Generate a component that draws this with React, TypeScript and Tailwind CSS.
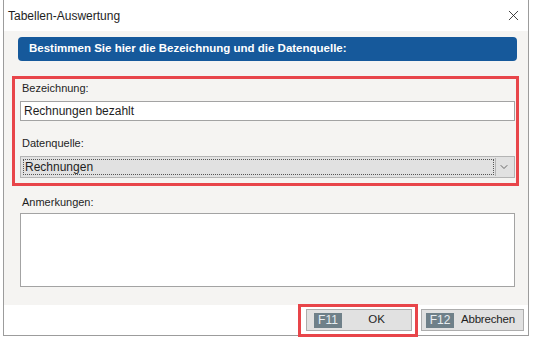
import { X, ChevronDown } from 'lucide-react';

const font = { fontFamily: '"Liberation Sans", Arial, sans-serif' };

function FKey({ label }: { label: string }) {
  return (
    <span className="flex h-[15px] w-[28px] items-center justify-center bg-[#6f8089] text-[12px] leading-none text-[#e9eef1]">
      {label}
    </span>
  );
}

export default function App() {
  return (
    <div className="relative h-[341px] w-[533px] bg-white text-[#1e1e1e]" style={font}>
      <div className="ml-[3px] flex h-[336px] w-[526px] flex-col border-x border-b border-[#9c9c9c]">
        {/* title bar */}
        <div className="flex h-[31px] shrink-0 items-center justify-between bg-white pl-[4px] pr-[6px]">
          <span className="text-[12px]">Tabellen-Auswertung</span>
          <X className="h-[17px] w-[17px] text-[#222]" strokeWidth={1.2} />
        </div>

        {/* content */}
        <div className="flex h-[274px] shrink-0 flex-col bg-[#f5f4f2] pl-[14px] pr-[11px] pt-[6px]">
          <div className="flex h-[24px] items-center rounded-[4px] bg-[#16599b] pl-[11px] text-[11.5px] font-bold text-white">
            Bestimmen Sie hier die Bezeichnung und die Datenquelle:
          </div>

          <div className="mx-[2px] mt-[20px] flex flex-col">
            <label className="h-[14px] pl-[2px] text-[11px] leading-[14px]">Bezeichnung:</label>
            <div className="mt-[6px] flex h-[20px] items-center border border-[#a3a3a3] bg-white pl-[3px] text-[12px]">
              Rechnungen bezahlt
            </div>

            <label className="mt-[15px] h-[14px] pl-[2px] text-[11px] leading-[14px]">Datenquelle:</label>
            <div className="mt-[6px] flex h-[22px] items-center border border-[#b4b4b4] bg-[#e1e1e1] p-[2px]">
              <div className="flex h-full flex-1 items-center border border-dotted border-[#555] pl-[1px] text-[12px]">
                Rechnungen
              </div>
              <div className="ml-[1px] h-[18px] w-px bg-[#b4b4b4]" />
              <div className="flex w-[16px] items-center justify-center">
                <ChevronDown className="h-[12px] w-[12px] text-[#666]" strokeWidth={2} />
              </div>
            </div>

            <label className="mt-[17px] h-[14px] pl-[2px] text-[11px] leading-[14px]">Anmerkungen:</label>
            <div className="mt-[4px] h-[74px] border border-[#a3a3a3] bg-white" />
          </div>
        </div>

        {/* footer */}
        <div className="flex flex-1 items-start justify-end gap-[9px] bg-white pr-[4px] pt-[4px]">
          <button className="flex h-[22px] w-[106px] items-center border border-[#adadad] bg-[#e1e1e1] pl-[7px] text-[11.5px]">
            <FKey label="F11" />
            <span className="flex-1 text-center">OK</span>
          </button>
          <button className="flex h-[22px] w-[103px] items-center gap-[7px] border border-[#adadad] bg-[#e1e1e1] pl-[4px] text-[11.5px]">
            <FKey label="F12" />
            <span className="tracking-[-0.2px]">Abbrechen</span>
          </button>
        </div>
      </div>

      {/* red annotation marks */}
      <div className="pointer-events-none absolute left-[12px] top-[76px] h-[110px] w-[507px] border-[3px] border-[#e8454a]" />
      <div className="pointer-events-none absolute left-[298px] top-[304px] h-[33px] w-[120px] border-[3px] border-[#e8454a]" />
    </div>
  );
}
